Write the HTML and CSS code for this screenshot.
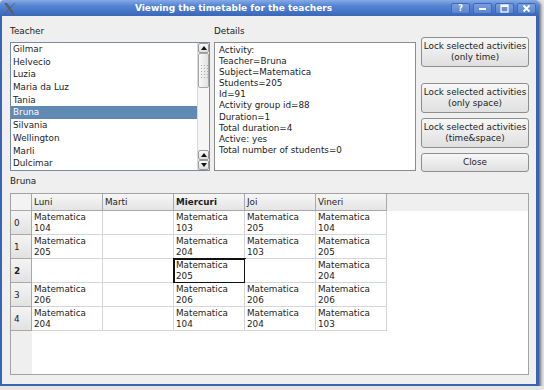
FILE: index.html
```html
<!DOCTYPE html>
<html lang="en">
<head>
  <meta charset="UTF-8">
  <title>Viewing the timetable for the teachers</title>
  <link rel="stylesheet" href="styles.css">
</head>
<body>
  <div class="window">
    <div class="titlebar">
      <svg class="app-icon" width="13" height="13" viewBox="0 0 13 13">
        <path d="M1 1 L4 1 L12 12 L9 12 Z" fill="#5b5f66"/>
        <path d="M11.5 1 L12.5 1 L2 12 L1 12 Z" fill="#5b5f66"/>
      </svg>
      <span class="title">Viewing the timetable for the teachers</span>
      <div class="wm-buttons">
        <span class="wm-btn">?</span>
        <span class="wm-btn"><svg width="9" height="9" viewBox="0 0 9 9"><rect x="1" y="4" width="7" height="2" fill="#fff"/></svg></span>
        <span class="wm-btn"><svg width="9" height="9" viewBox="0 0 9 9"><rect x="1" y="1" width="7" height="7" fill="none" stroke="#fff" stroke-width="1.2"/><rect x="1" y="1" width="7" height="2" fill="#fff"/></svg></span>
        <span class="wm-btn"><svg width="9" height="9" viewBox="0 0 9 9"><path d="M1.5 1.5 L7.5 7.5 M7.5 1.5 L1.5 7.5" stroke="#fff" stroke-width="1.8"/></svg></span>
      </div>
    </div>

    <div class="client">
      <div class="top">
        <div class="teacher-col">
          <div class="label">Teacher</div>
          <div class="listbox">
            <ul class="items">
              <li>Gilmar</li>
              <li>Helvecio</li>
              <li>Luzia</li>
              <li>Maria da Luz</li>
              <li>Tania</li>
              <li class="selected">Bruna</li>
              <li>Silvania</li>
              <li>Wellington</li>
              <li>Marli</li>
              <li>Dulcimar</li>
            </ul>
            <div class="scrollbar">
              <span class="sb-btn"><svg width="6" height="4" viewBox="0 0 6 4"><polygon points="3,0 6,4 0,4" fill="#111"/></svg></span>
              <span class="sb-thumb"><span class="grip"></span></span>
              <span class="sb-track"></span>
              <span class="sb-btn"><svg width="6" height="4" viewBox="0 0 6 4"><polygon points="3,0 6,4 0,4" fill="#111"/></svg></span>
              <span class="sb-btn"><svg width="6" height="4" viewBox="0 0 6 4"><polygon points="0,0 6,0 3,4" fill="#111"/></svg></span>
            </div>
          </div>
        </div>

        <div class="details-col">
          <div class="label">Details</div>
          <div class="details">
            Activity:<br>
            Teacher=Bruna<br>
            Subject=Matematica<br>
            Students=205<br>
            Id=91<br>
            Activity group id=88<br>
            Duration=1<br>
            Total duration=4<br>
            Active: yes<br>
            Total number of students=0
          </div>
        </div>

        <div class="actions">
          <button class="btn tall">Lock selected activities<br>(only time)</button>
          <button class="btn tall spaced">Lock selected activities<br>(only space)</button>
          <button class="btn tall">Lock selected activities<br>(time&amp;space)</button>
          <button class="btn">Close</button>
        </div>
      </div>

      <div class="label bruna">Bruna</div>

      <div class="grid">
        <div class="grid-head">
          <span class="corner"></span>
          <span class="hcell">Luni</span>
          <span class="hcell">Marti</span>
          <span class="hcell current">Miercuri</span>
          <span class="hcell">Joi</span>
          <span class="hcell">Vineri</span>
        </div>
        <div class="grid-row">
          <span class="rhead">0</span>
          <span class="cell">Matematica<br>104</span>
          <span class="cell"></span>
          <span class="cell">Matematica<br>103</span>
          <span class="cell">Matematica<br>205</span>
          <span class="cell">Matematica<br>104</span>
        </div>
        <div class="grid-row">
          <span class="rhead">1</span>
          <span class="cell">Matematica<br>205</span>
          <span class="cell"></span>
          <span class="cell">Matematica<br>204</span>
          <span class="cell">Matematica<br>103</span>
          <span class="cell">Matematica<br>205</span>
        </div>
        <div class="grid-row">
          <span class="rhead current">2</span>
          <span class="cell"></span>
          <span class="cell"></span>
          <span class="cell focused">Matematica<br>205</span>
          <span class="cell"></span>
          <span class="cell">Matematica<br>204</span>
        </div>
        <div class="grid-row">
          <span class="rhead">3</span>
          <span class="cell">Matematica<br>206</span>
          <span class="cell"></span>
          <span class="cell">Matematica<br>206</span>
          <span class="cell">Matematica<br>206</span>
          <span class="cell">Matematica<br>206</span>
        </div>
        <div class="grid-row">
          <span class="rhead">4</span>
          <span class="cell">Matematica<br>204</span>
          <span class="cell"></span>
          <span class="cell">Matematica<br>104</span>
          <span class="cell">Matematica<br>204</span>
          <span class="cell">Matematica<br>103</span>
        </div>
      </div>
    </div>
  </div>
</body>
</html>
```

FILE: styles.css
```css
*, *::before, *::after {
  box-sizing: border-box;
}
body {
  margin: 0;
  background: #e4e4e4;
  font-family: "DejaVu Sans", sans-serif;
  font-size: 8.8px;
  color: #1c1c1c;
}
/* Window frame */
.window {
  width: 539px;
  height: 386px;
  display: flex;
  flex-direction: column;
  box-shadow: 2px 2px 3px rgba(0, 0, 0, 0.5);
  border-radius: 4px 4px 0 0;
}
.titlebar {
  height: 16px;
  display: flex;
  align-items: center;
  padding: 0 3px 0 3px;
  border-radius: 4px 4px 0 0;
  background: linear-gradient(#86aae6, #5585d2 35%, #4271c2 80%, #3a66b6);
}
.app-icon {
  flex: none;
}
.title {
  flex: 1;
  text-align: center;
  color: #fff;
  font-weight: bold;
  font-size: 9px;
  line-height: 16px;
}
.wm-buttons {
  display: flex;
  gap: 3px;
}
.wm-btn {
  width: 19px;
  height: 11px;
  display: flex;
  align-items: center;
  justify-content: center;
  border: 1px solid #3f6ab8;
  border-radius: 2px;
  background: linear-gradient(#7a9fde, #5a86cf);
  color: #fff;
  font-weight: bold;
  font-size: 8px;
}
.client {
  flex: 1;
  display: flex;
  flex-direction: column;
  background: #efefef;
  border: 2px solid #3b63b4;
  border-top: 0;
  border-right-width: 3px;
  padding: 10px 7px 9px 8px;
}
.label {
  height: 11px;
  line-height: 11px;
  margin-bottom: 5px;
}
.top {
  display: flex;
  align-items: flex-start;
}
/* Teacher list */
.teacher-col {
  width: 200px;
  margin-right: 4px;
}
.listbox {
  height: 129px;
  display: flex;
  background: #fff;
  border: 1px solid #7b8aa3;
}
.items {
  flex: 1;
  list-style: none;
  margin: 0;
  padding: 0;
}
.items li {
  height: 12.7px;
  line-height: 12.7px;
  padding-left: 2px;
}
.items li.selected {
  background: #6089b3;
  color: #fff;
}
.scrollbar {
  width: 12px;
  display: flex;
  flex-direction: column;
  background: #f6f6f6;
  border-left: 1px solid #dadada;
}
.sb-btn {
  height: 10px;
  display: flex;
  align-items: center;
  justify-content: center;
  border: 1px solid #9a9a9a;
  border-radius: 2px;
  background: linear-gradient(#fafafa, #dedede);
}
.sb-thumb {
  height: 35px;
  display: flex;
  align-items: center;
  justify-content: center;
  border: 1px solid #a6a6a6;
  border-radius: 2px;
  background: linear-gradient(to right, #f8f8f8, #e2e2e2);
}
.grip {
  width: 8px;
  height: 14px;
  background-image: radial-gradient(#a9a9a9 0.8px, transparent 0.9px);
  background-size: 3px 3px;
}
.sb-track {
  flex: 1;
}
/* Details */
.details-col {
  width: 202px;
  margin-right: 5px;
}
.details {
  height: 129px;
  background: #fff;
  border: 1px solid #8c8c8c;
  padding: 2px 4px;
  line-height: 11.1px;
}
/* Buttons */
.actions {
  width: 108px;
  margin-top: 11px;
  display: flex;
  flex-direction: column;
  gap: 5px;
}
.btn {
  height: 19px;
  padding: 0;
  font: inherit;
  line-height: 11px;
  color: #1c1c1c;
  border: 1px solid #8e8e8e;
  border-radius: 3px;
  background: linear-gradient(#f7f7f7, #e0e0e0);
}
.btn.tall {
  height: 30px;
}
.btn.spaced {
  margin-top: 11px;
}
.bruna {
  margin-top: 4px;
  margin-bottom: 6px;
}
/* Timetable grid */
.grid {
  flex: 1;
  border: 1px solid #a2a2a2;
  background: linear-gradient(to right, #efefef 21px, #fff 21px);
}
.grid-head {
  height: 17px;
  display: flex;
  background: #efefef;
}
.corner {
  width: 21px;
  border-right: 1px solid #a8a8a8;
  border-bottom: 1px solid #a8a8a8;
  background: #f3f3f3;
}
.hcell {
  width: 71px;
  padding-left: 2px;
  line-height: 16px;
  border-right: 1px solid #a8a8a8;
  border-bottom: 1px solid #a8a8a8;
  background: linear-gradient(#f7f7f7, #e4e4e4);
}
.hcell.current, .rhead.current {
  font-weight: bold;
}
.grid-row {
  height: 24px;
  display: flex;
}
.rhead {
  width: 21px;
  padding-left: 3px;
  display: flex;
  align-items: center;
  border-right: 1px solid #a8a8a8;
  border-bottom: 1px solid #a8a8a8;
  background: linear-gradient(#f4f4f4, #e2e2e2);
}
.cell {
  width: 71px;
  padding: 1px 0 0 2px;
  line-height: 11px;
  background: #fff;
  border-right: 1px solid #d6d6d6;
  border-bottom: 1px solid #d6d6d6;
}
.cell.focused {
  outline: 2px solid #111;
  outline-offset: -1px;
}
```
